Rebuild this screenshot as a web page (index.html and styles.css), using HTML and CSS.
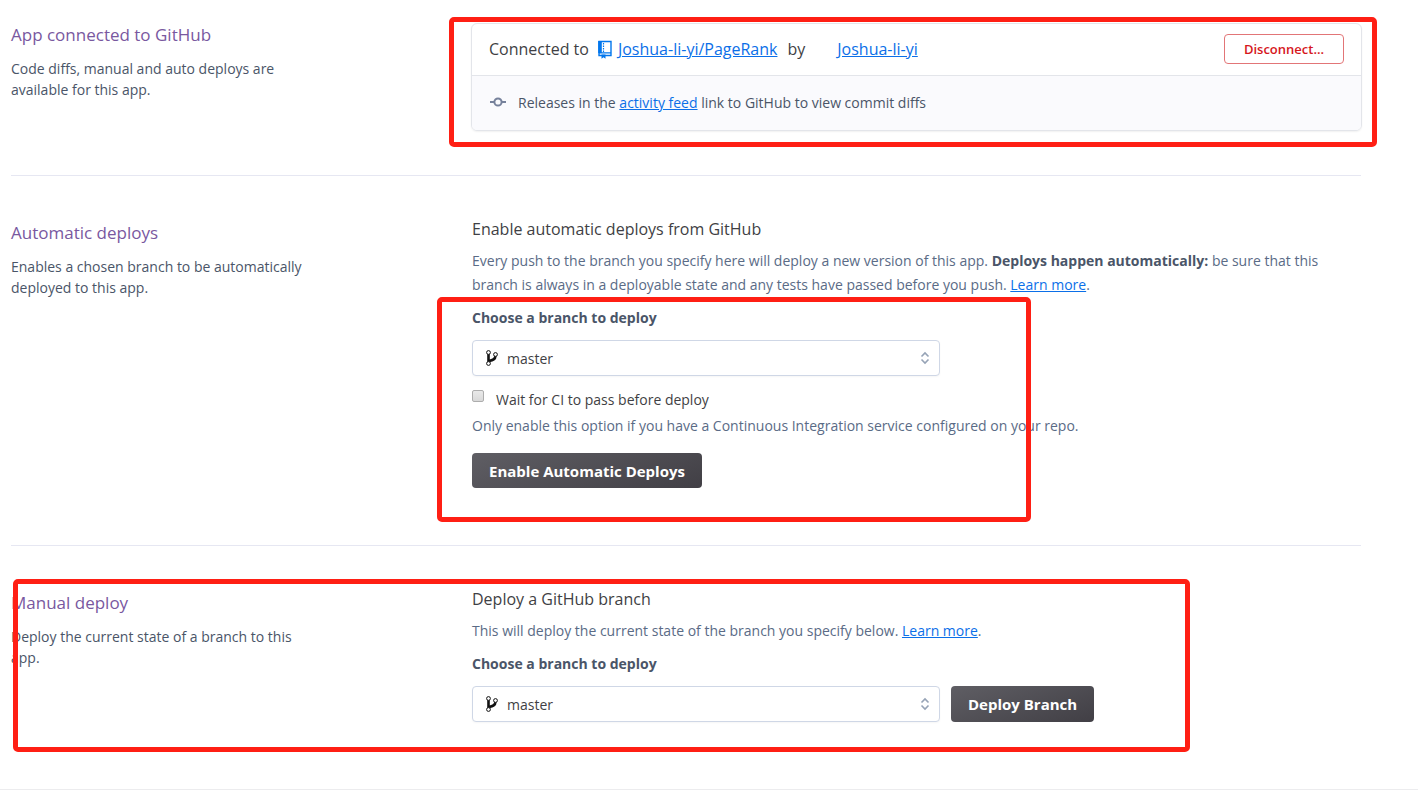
FILE: index.html
```html
<!DOCTYPE html>
<html lang="en">
<head>
  <meta charset="UTF-8">
  <meta name="viewport" content="width=device-width, initial-scale=1">
  <title>Deploy</title>
  <link rel="stylesheet" href="styles.css">
</head>
<body>
  <main>
    <section class="panel panel-first">
      <div class="panel-info">
        <h2>App connected to GitHub</h2>
        <p>Code diffs, manual and auto deploys are available for this app.</p>
      </div>
      <div class="panel-body">
        <div class="card">
          <div class="card-header">
            <span>Connected to</span>
            <svg class="repo-icon" width="16" height="20" viewBox="0 0 16 20">
              <path d="M2 1.500h12v14H2z" fill="none" stroke="#0176ed" stroke-width="1.400"/>
              <path d="M1.200 1h3.600v12H1.200z" fill="#0176ed"/>
              <path d="M2 12.800h12" stroke="#0176ed" stroke-width="1.200"/>
              <path d="M6.500 3v9" stroke="#0176ed" stroke-width="1.200" stroke-dasharray="1.500 1"/>
              <path d="M4.500 14.500h4v4.300l-2-1.600-2 1.600z" fill="#0176ed"/>
            </svg>
            <a href="#">Joshua-li-yi/PageRank</a>
            <span class="by">by</span>
            <a class="user" href="#">Joshua-li-yi</a>
            <button class="btn-danger" type="button">Disconnect...</button>
          </div>
          <div class="card-footer">
            <svg width="18" height="16" viewBox="0 0 18 16" fill="none" stroke="#76819b" stroke-width="2">
              <circle cx="9" cy="7" r="3.600"/>
              <path d="M1 7h4.400M12.600 7H17"/>
            </svg>
            <span>Releases in the <a href="#">activity feed</a> link to GitHub to view commit diffs</span>
          </div>
        </div>
        <div class="mark mark-connect"></div>
      </div>
    </section>

    <section class="panel">
      <div class="panel-info">
        <h2>Automatic deploys</h2>
        <p>Enables a chosen branch to be automatically deployed to this app.</p>
      </div>
      <div class="panel-body">
        <h3>Enable automatic deploys from GitHub</h3>
        <p class="text">Every push to the branch you specify here will deploy a new version of this app. <strong>Deploys happen automatically:</strong> be sure that this branch is always in a deployable state and any tests have passed before you push. <a href="#">Learn more</a>.</p>
        <form class="auto-form">
          <label class="field-label" for="auto-branch">Choose a branch to deploy</label>
          <div class="select">
            <svg class="branch-icon" width="12" height="16" viewBox="0 0 12 16" fill="none" stroke="#111">
              <path d="M2.500 4v8" stroke-width="2.600"/>
              <path d="M9.400 6c0 3.200-2.400 4-6.400 5" stroke-width="2.600"/>
              <circle cx="2.500" cy="2.500" r="1.900" fill="#fff"/>
              <circle cx="9.500" cy="4.500" r="1.900" fill="#fff"/>
              <circle cx="2.500" cy="13.500" r="1.900" fill="#fff"/>
            </svg>
            <select id="auto-branch"><option>master</option></select>
            <svg class="arrows" width="10" height="14" viewBox="0 0 10 14" fill="none" stroke="#96a3b6" stroke-width="1.600">
              <path d="M1.500 5.500L5 2l3.500 3.500M1.500 8.500L5 12l3.500-3.500"/>
            </svg>
          </div>
          <div class="check">
            <input type="checkbox" id="wait-ci">
            <label for="wait-ci">Wait for CI to pass before deploy</label>
          </div>
          <p class="text hint">Only enable this option if you have a Continuous Integration service configured on your repo.</p>
          <button class="btn" type="button">Enable Automatic Deploys</button>
          <div class="mark mark-auto"></div>
        </form>
      </div>
    </section>

    <section class="panel">
      <div class="panel-info">
        <h2>Manual deploy</h2>
        <p>Deploy the current state of a branch to this app.</p>
      </div>
      <div class="panel-body">
        <h3>Deploy a GitHub branch</h3>
        <p class="text">This will deploy the current state of the branch you specify below. <a href="#">Learn more</a>.</p>
        <form>
          <label class="field-label" for="manual-branch">Choose a branch to deploy</label>
          <div class="row">
            <div class="select">
              <svg class="branch-icon" width="12" height="16" viewBox="0 0 12 16" fill="none" stroke="#111">
                <path d="M2.500 4v8" stroke-width="2.600"/>
                <path d="M9.400 6c0 3.200-2.400 4-6.400 5" stroke-width="2.600"/>
                <circle cx="2.500" cy="2.500" r="1.900" fill="#fff"/>
                <circle cx="9.500" cy="4.500" r="1.900" fill="#fff"/>
                <circle cx="2.500" cy="13.500" r="1.900" fill="#fff"/>
              </svg>
              <select id="manual-branch"><option>master</option></select>
              <svg class="arrows" width="10" height="14" viewBox="0 0 10 14" fill="none" stroke="#96a3b6" stroke-width="1.600">
                <path d="M1.500 5.500L5 2l3.500 3.500M1.500 8.500L5 12l3.500-3.500"/>
              </svg>
            </div>
            <button class="btn" type="button">Deploy Branch</button>
          </div>
        </form>
      </div>
      <div class="mark mark-manual"></div>
    </section>
  </main>
  <hr class="page-end">
</body>
</html>
```
FILE: styles.css
```css
* { box-sizing: border-box; }
body { margin: 0; background: #fff; color: #3f3f44; font-family: "Open Sans", "Noto Sans", sans-serif; font-size: 14px; line-height: 24px; }
h2, h3, p { margin: 0; font-weight: 400; }
a { color: #0b6fe8; text-decoration: underline; }
button, select, input { font-family: inherit; }

main { padding: 0 57px 0 11px; }
.panel { position: relative; display: grid; grid-template-columns: 461px 1fr; padding: 44px 0 57px; border-bottom: 1px solid #e6e7f2; }
.panel-first { padding: 23px 0 44px; }
.panel:last-child { padding-bottom: 67px; border-bottom: 0; }
.panel-info h2 { margin: 1px 0 11px; color: #79589f; font-size: 17px; line-height: 24px; }
.panel-first h2 { margin-top: 0; }
.panel-info p { max-width: 310px; color: #4a5568; line-height: 21px; }
.panel-body { position: relative; }
.panel-body h3 { margin: -2px 0 9px; font-size: 16px; line-height: 22px; }
.text { max-width: 875px; color: #5a6b86; }
.text strong { color: #4a5568; font-weight: 700; }

.card { margin: 0 -1px; border: 1px solid #e3e5ea; border-radius: 6px; box-shadow: 0 1px 2px rgba(0, 0, 0, 0.06); overflow: hidden; }
.card-header { display: flex; align-items: center; height: 52px; padding: 0 17px 2px; border-bottom: 1px solid #e3e5ea; font-size: 16px; line-height: 22px; }
.repo-icon { margin: 3px 5px 0 8px; }
.by { margin: 0 32px 0 10px; }
.card-footer { display: flex; align-items: center; gap: 11px; height: 54px; padding: 0 17px; background: #fafafd; color: #4a5568; }

.field-label { display: block; padding: 9px 0 10px; color: #4a5568; font-weight: 700; }
.select { position: relative; width: 468px; }
.select select { display: block; width: 100%; height: 36px; padding: 0 34px; border: 1px solid #cfd7e6; border-radius: 4px; background: #fff; color: #3f3f44; font-size: 14px; appearance: none; box-shadow: 0 1px 2px rgba(0, 0, 0, 0.04); }
.branch-icon { position: absolute; top: 10px; left: 14px; }
.arrows { position: absolute; top: 11px; right: 10px; }

.check { display: flex; align-items: flex-start; margin-top: 12px; gap: 12px; }
.check input { width: 12px; height: 12px; margin: 2px 0 0; border: 1px solid #adadad; border-radius: 2px; background: linear-gradient(#e9e9e9, #d9d9d9); appearance: none; }
.hint { margin: 2px 0 15px; }
.row { display: flex; gap: 11px; }

.btn { height: 35px; padding: 0 17px; border: 0; border-radius: 4px; background: linear-gradient(160deg, #5f5e64, #413f45); color: #fff; font-size: 15px; font-weight: 700; }
.row .btn { height: 36px; }
.btn-danger { width: 120px; height: 30px; margin-left: auto; border: 1px solid #e27577; border-radius: 4px; background: #fff; color: #d6161c; font-size: 13px; font-weight: 600; }

/* red highlight boxes */
.mark { position: absolute; border: 5px solid #ff1f14; border-radius: 5px; pointer-events: none; }
.mark-connect { top: -6px; right: -16px; bottom: -16px; left: -23px; }
.auto-form { position: relative; }
.mark-auto { top: 0; bottom: -34px; left: -35px; width: 594px; }
.mark-manual { top: 33px; bottom: 37px; left: 2px; width: 1177px; }

.page-end { margin: 0; border: 0; border-top: 1px solid #ececee; }
```
